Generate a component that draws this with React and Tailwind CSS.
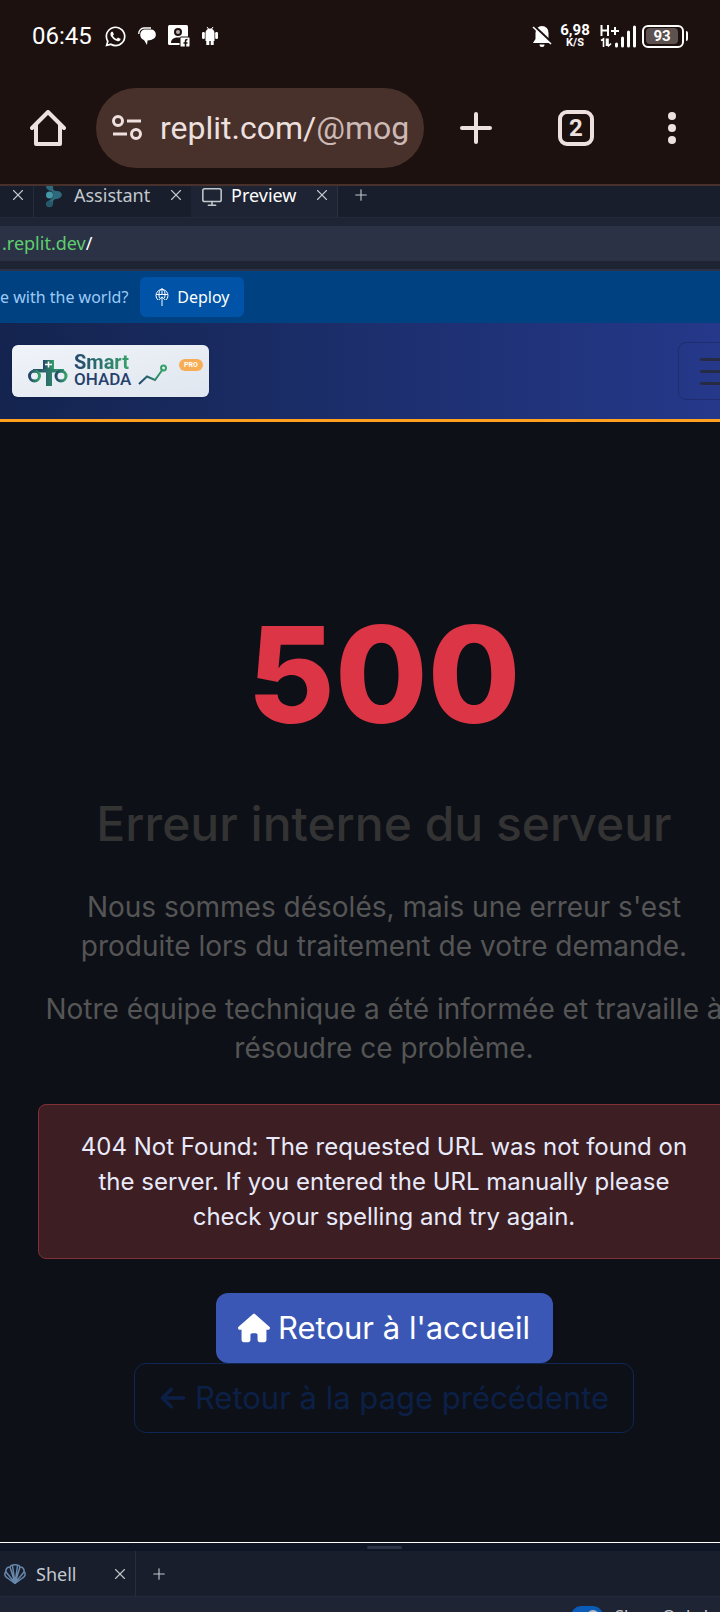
import { useState } from "react";
import { FaHouse, FaArrowLeft, FaWhatsapp } from "react-icons/fa6";
import { Monitor, Plus, X } from "lucide-react";

function StatusBar() {
  return (
    <div className="flex h-[72px] items-center justify-between px-8 text-white">
      <div className="flex items-center gap-3">
        <span className="w-[61px] text-2xl leading-none">06:45</span>
        <FaWhatsapp className="-mx-px size-[23px]" aria-hidden="true" />
        <svg viewBox="0 0 18 18" className="size-[18px]" fill="currentColor" aria-hidden="true">
          <path d="M6 2.500h7a5 5 0 0 1 1.500 9.700L13 13l-3.500.500L9 18l-3-5C1 12 1 3.500 6 2.500z" />
          <path d="M.8 7A5.500 5.500 0 0 1 6 1h7" fill="none" stroke="currentColor" strokeWidth="1.300" />
        </svg>
        <svg viewBox="0 0 22 22" className="size-[22px]" aria-hidden="true">
          <rect x="0" y="0" width="20" height="20" rx="1.500" fill="currentColor" />
          <circle cx="10" cy="7" r="4" fill="#1c110f" />
          <circle cx="10" cy="7" r="2" fill="#b7b0af" />
          <path d="M3 18c0-4 3-5.500 7-5.500 2 0 3 .3 3 .3V18z" fill="#1c110f" />
          <rect x="12" y="12" width="10" height="10" rx="1" fill="currentColor" stroke="#1c110f" />
          <path d="M17.500 22v-6q0-1.500 2-1.500M15.500 18h4" stroke="#1c110f" strokeWidth="1.500" fill="none" />
        </svg>
        <svg viewBox="0 0 16 18" className="h-[18px] w-4" fill="currentColor" aria-hidden="true">
          <path d="M3.500 6a4.500 4.500 0 0 1 9 0v8h-9z" />
          <path d="M5 0l1.500 2M11 0L9.500 2" stroke="currentColor" />
          <rect x="0" y="5" width="2.800" height="7" rx="1.200" />
          <rect x="13.200" y="5" width="2.800" height="7" rx="1.200" />
          <path d="M4.300 13h3v5h-3zM8.700 13h3v5h-3z" />
        </svg>
      </div>
      <div className="flex items-center">
        <svg viewBox="0 0 20 22" className="h-[22px] w-5" aria-hidden="true">
          <path d="M10 1a6.500 6.500 0 0 1 6.500 7v6l2.500 4H1l2.500-4V8A6.500 6.500 0 0 1 10 1zM7.500 19.500h5a2.500 2.500 0 0 1-5 0z" fill="currentColor" />
          <path d="M2 1l18 17" stroke="#1c110f" strokeWidth="2.500" />
          <path d="M1 2l18 17" stroke="currentColor" strokeWidth="1.600" />
        </svg>
        <div className="ml-2 w-[30px] text-center font-bold">
          <div className="text-[15px] leading-[13px]">6,98</div>
          <div className="text-[11px] leading-3">K/S</div>
        </div>
        <svg viewBox="0 0 36 24" className="ml-[10px] h-6 w-9" aria-hidden="true">
          <path d="M1.500 1v11M8 1v11M1.500 6.500h7M11 7h8M15 3v8" stroke="currentColor" strokeWidth="2" fill="none" />
          <path d="M1 16.500l2.500-1.500v8M8 14.500V22M6.500 14.500V22M8 22.500l3-3" stroke="currentColor" strokeWidth="1.600" fill="none" />
          <path d="M16.500 22v-2M22.500 22v-8M28.500 22V8M34.500 22V3" stroke="currentColor" strokeWidth="3" strokeLinecap="round" />
        </svg>
        <div className="ml-1.5 flex h-[23px] w-[42px] items-center justify-start rounded-md border-2 border-white p-0.5">
          <span className="w-8 rounded-sm bg-[#5d5250] text-center text-[15px] font-bold leading-4">93</span>
        </div>
        <span className="ml-0.5 h-2.5 w-0.5 rounded-r bg-white" />
      </div>
    </div>
  );
}

function BrowserBar() {
  return (
    <div className="flex h-[114px] items-center border-b-2 border-[#48302b] px-[30px] text-[#ede0de]">
      <button aria-label="Accueil" className="shrink-0">
        <svg viewBox="0 0 36 36" className="size-9" fill="none" stroke="currentColor" strokeWidth="4" strokeLinecap="round" strokeLinejoin="round" aria-hidden="true">
          <path d="M2 18L18 2l16 16M6 15v19h24V15" />
        </svg>
      </button>
      <button className="ml-[30px] flex h-20 min-w-0 flex-1 items-center gap-[18px] rounded-full bg-[#48302b] px-4">
        <svg viewBox="0 0 30 26" className="h-[26px] w-[30px] shrink-0" fill="none" stroke="currentColor" strokeWidth="3" aria-hidden="true">
          <circle cx="6" cy="6" r="4.500" />
          <circle cx="24" cy="19" r="4.500" />
          <path d="M15 6h14M1 19h14" />
        </svg>
        <span className="whitespace-nowrap text-[32px]">replit.com/<span className="text-[#cdb9b5]">@mog</span></span>
      </button>
      <button aria-label="Nouvel onglet" className="ml-9 shrink-0">
        <svg viewBox="0 0 32 32" className="size-8" stroke="currentColor" strokeWidth="4" strokeLinecap="round" aria-hidden="true">
          <path d="M16 2v28M2 16h28" />
        </svg>
      </button>
      <button className="ml-[66px] flex size-9 shrink-0 items-center justify-center rounded-[9px] border-4 border-[#ede0de] text-2xl font-bold leading-none">2</button>
      <button aria-label="Menu" className="ml-[74px] mr-3.5 flex shrink-0 flex-col gap-1">
        <span className="size-2 rounded-full bg-[#ede0de]" />
        <span className="size-2 rounded-full bg-[#ede0de]" />
        <span className="size-2 rounded-full bg-[#ede0de]" />
      </button>
    </div>
  );
}

function CloseButton({ className = "" }) {
  return (
    <button aria-label="Fermer" className={className}>
      <X className="size-[18px]" strokeWidth={1.5} />
    </button>
  );
}

function WorkspaceTabs() {
  return (
    <div className="flex h-8 items-start border-b border-[#222938] bg-[#181e2c] text-lg leading-[18px]">
      <div className="flex h-full w-[34px] items-start justify-end border-r border-[#262d3c] pr-1.5">
        <CloseButton />
      </div>
      <div className="flex h-full w-[157px] items-start pl-3">
        <svg viewBox="0 0 16 22" className="h-[22px] w-4 shrink-0" aria-hidden="true">
          <path d="M0 0h7v1c0 3 1 4 4 4 6 0 7 7 0 8-3 0-4 1-4 4 0 6-7 5-7 1 0-3 3-3 5-5 3-2 3-6 0-8C2 4 0 3 0 0z" fill="#2f6a7c" />
          <circle cx="3.500" cy="9" r="3.500" fill="#4596a6" />
          <circle cx="3.500" cy="18" r="3" fill="#24586a" />
        </svg>
        <button className="ml-3 flex-1 text-left">Assistant</button>
        <CloseButton className="mr-1.5" />
      </div>
      <div className="flex h-full w-[147px] items-start border-r border-[#2b3245] bg-[#1e2433] pl-2.5 text-white">
        <Monitor className="size-[22px] text-[#c2c8cc]" strokeWidth={1.7} />
        <button className="ml-2 flex-1 text-left">Preview</button>
        <CloseButton className="mr-1.5 text-[#c2c8cc]" />
      </div>
      <button aria-label="Nouvel onglet" className="ml-3.5">
        <Plus className="size-[18px]" strokeWidth={1.5} />
      </button>
    </div>
  );
}

function DeployIcon() {
  return (
    <svg viewBox="0 0 14 18" className="h-[18px] w-3.5" fill="none" stroke="currentColor" aria-hidden="true">
      <path d="M3 12A6 6 0 1 1 11 12M1 6.500h12M4.500 10C3 5 5 1 7 .700 9 1 11 5 9.500 10M7 1v5.500M7 18V9M3.800 12L7 8.800l3.200 3.200" />
    </svg>
  );
}

function Brand() {
  return (
    <a href="#" className="flex h-[52px] w-[197px] items-center rounded-md bg-linear-to-br from-[#f0f4f9] to-[#e0e6ef] pl-4 shadow-sm">
      <svg viewBox="0 0 40 28" className="mt-1 h-7 w-10 shrink-0" fill="none" aria-hidden="true">
        <defs>
          <linearGradient id="brand" x1="0" x2="1">
            <stop stopColor="#24456b" />
            <stop offset="1" stopColor="#34a269" />
          </linearGradient>
        </defs>
        <rect x="15" y="1" width="11" height="9" fill="url(#brand)" />
        <path d="M20.500 2.500v6M17 5.500h7" stroke="#fff" strokeWidth="1.500" />
        <path d="M5 10h31v3.500H24V27h-6V13.500H5z" fill="url(#brand)" />
        <circle cx="6.500" cy="17" r="5" stroke="url(#brand)" strokeWidth="3" />
        <circle cx="33" cy="17" r="5" stroke="url(#brand)" strokeWidth="3" />
      </svg>
      <span className="ml-1.5 flex w-[60px] flex-col items-start">
        <span className="bg-linear-to-r from-[#24456b] to-[#38a169] bg-clip-text text-xl font-bold leading-[17px] text-transparent">Smart</span>
        <span className="text-[17px] font-medium leading-[17px] text-[#24406b]">OHADA</span>
      </span>
      <svg viewBox="0 0 30 22" className="ml-1 mt-2 h-[22px] w-[30px] shrink-0" fill="none" aria-hidden="true">
        <path d="M1 20L9 12.500l8 3.500 8-11" stroke="url(#brand)" strokeWidth="2" />
        <circle cx="25.500" cy="4" r="2.500" stroke="#38a169" strokeWidth="2" />
      </svg>
      <span className="-mt-3 ml-[11px] flex h-3 w-6 items-center justify-center rounded-full bg-[#f6ad55] text-[7px] font-bold leading-none text-white">PRO</span>
    </a>
  );
}

function ShellIcon() {
  return (
    <svg viewBox="0 0 22 22" className="size-[22px] shrink-0" fill="none" stroke="#6787ab" strokeWidth="1.500" strokeLinejoin="round" aria-hidden="true">
      <path d="M11 20.500L3.500 15C.500 13.500.300 10.500 1.800 8.800 1.800 6 3.500 4 6 4c1-3 9-3 10 0 2.500 0 4.200 2 4.200 4.800 1.500 1.700 1.300 4.700-1.700 6.200z" />
      <path d="M11 20L1.800 8.800M11 20L6 4M11 20L16 4M11 20l9.200-11.200M11 20L8.500 3M11 20l2.500-17" />
      <path d="M7 17l4 4 4-4-4-3z" fill="#6787ab" stroke="none" />
    </svg>
  );
}

export default function App() {
  const [onlyLatest, setOnlyLatest] = useState(true);
  return (
    <div className="min-h-screen overflow-hidden bg-[#1c110f] font-[Roboto,sans-serif]">
      <StatusBar />
      <BrowserBar />
      <div className="bg-[#1e2433] font-['Noto_Sans',sans-serif] text-[#c2c8cc]">
        <WorkspaceTabs />
        <div className="border-b-2 border-[#2b3245] py-2">
          <div className="h-[35px] bg-[#2b3245] pl-0.5 text-lg leading-[35px] text-white"><span className="text-[#5fce6e]">.replit.dev</span>/</div>
        </div>
      </div>
      <div className="flex h-[52px] items-center bg-[#004182] font-['Noto_Sans',sans-serif] text-base text-[#9ccbf7]">
        <span className="whitespace-nowrap">e with the world?</span>
        <button className="ml-3 flex h-10 w-[104px] items-center justify-center gap-2 rounded-md bg-[#0053a6] text-white">
          <DeployIcon />
          Deploy
        </button>
      </div>
      <header className="flex h-[99px] items-center justify-between overflow-hidden border-b-[3px] border-[#ffa01f] bg-linear-to-r from-[#14244f] to-[#25388a] pl-3">
        <Brand />
        <button aria-label="Navigation" className="-mr-[42px] flex h-[58px] w-[84px] flex-col items-center justify-center gap-[9px] rounded-lg border border-[#1f2d70]">
          <span className="h-[3px] w-10 rounded-full bg-[#252b45]" />
          <span className="h-[3px] w-10 rounded-full bg-[#252b45]" />
          <span className="h-[3px] w-10 rounded-full bg-[#252b45]" />
        </button>
      </header>
      <main className="bg-[#0d1017] pb-[109px] pt-[164px] font-[Inter,sans-serif]">
        <div className="-mr-2.5 ml-[38px] text-center">
          <h1 className="text-[134px] font-extrabold leading-[176px] text-[#dc3545]">500</h1>
          <h2 className="mt-[34px] text-5xl font-medium leading-[56px] text-[#333]">Erreur interne du serveur</h2>
          <p className="mt-9 text-[28px] leading-[39px] text-[#555]">Nous sommes désolés, mais une erreur s'est<br />produite lors du traitement de votre demande.</p>
          <p className="mt-6 whitespace-nowrap text-[28px] leading-[39px] text-[#555]">Notre équipe technique a été informée et travaille à<br />résoudre ce problème.</p>
          <div role="alert" className="mt-9 rounded-lg border border-[#842f36] bg-[#3d1e23] py-6 text-2xl leading-[35px] text-[#e8eafa]">404 Not Found: The requested URL was not found on<br />the server. If you entered the URL manually please<br />check your spelling and try again.</div>
          <div className="mt-[34px] flex flex-col items-center text-[31px]">
            <a href="#" className="flex h-[70px] w-[337px] items-center justify-center gap-2 rounded-xl bg-[#3a57b5] text-white">
              <FaHouse className="size-8" aria-hidden="true" />Retour à l'accueil
            </a>
            <a href="#" className="flex h-[70px] w-[500px] items-center justify-center gap-2 rounded-xl border border-[#0f2752] text-[#0c2047]">
              <FaArrowLeft className="size-7" aria-hidden="true" />Retour à la page précédente
            </a>
          </div>
        </div>
      </main>
      <section className="border-t border-white bg-[#0e1524] font-['Noto_Sans',sans-serif] text-lg text-[#c2c8cc]">
        <div className="flex h-2 items-center justify-center pl-12">
          <span className="h-[3px] w-[35px] rounded-full bg-[#2b3245]" />
        </div>
        <div className="flex h-[46px] border-b border-[#222938] bg-[#181e2c]">
          <div className="flex w-[136px] items-center border-r border-[#262d3c] pl-1">
            <ShellIcon />
            <button className="ml-2.5 flex-1 text-left">Shell</button>
            <CloseButton className="mr-1.5" />
          </div>
          <button aria-label="Nouvel onglet" className="ml-3.5">
            <Plus className="size-[18px]" strokeWidth={1.5} />
          </button>
        </div>
        <div className="flex h-4 items-start justify-end overflow-hidden bg-[#1e2433] pt-[9px]">
          <label className="-mr-8 flex h-5 items-center gap-3 whitespace-nowrap text-[17px] leading-5">
            <input
              type="checkbox"
              checked={onlyLatest}
              onChange={() => setOnlyLatest(!onlyLatest)}
              className="flex h-5 w-8 appearance-none items-center rounded-full bg-[#3c445c] p-1 before:size-3 before:rounded-full before:bg-[#b5bac0] before:content-[''] checked:justify-end checked:bg-[#0b5cb8]"
            />
            Show Only Latest
          </label>
        </div>
      </section>
    </div>
  );
}
